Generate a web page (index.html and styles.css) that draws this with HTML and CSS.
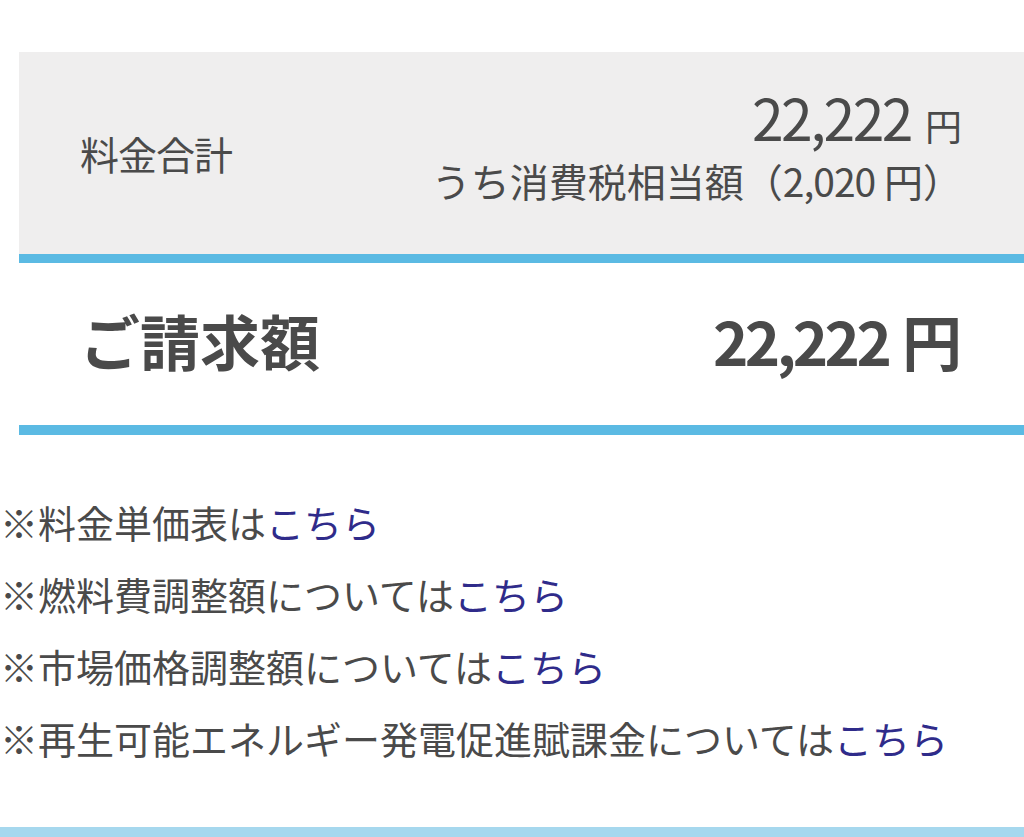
FILE: index.html
```html
<!DOCTYPE html>
<html lang="ja">
<head>
  <meta charset="UTF-8">
  <meta name="viewport" content="width=device-width, initial-scale=1.0">
  <title>ご請求額</title>
  <link rel="stylesheet" href="styles.css">
</head>
<body>
  <div class="page">
    <div class="summary">
      <div class="subtotal">
        <div class="subtotal-label">料金合計</div>
        <div class="subtotal-value">
          <div class="amount"><span class="num">22,222</span><span class="yen">円</span></div>
          <div class="tax">うち消費税相当額（<span class="tax-num">2,020</span> 円）</div>
        </div>
      </div>
      <div class="total">
        <div class="total-label">ご請求額</div>
        <div class="total-value"><span class="num">22,222</span> 円</div>
      </div>
    </div>

    <ul class="notes">
      <li>※料金単価表は<a href="#">こちら</a></li>
      <li>※燃料費調整額については<a href="#">こちら</a></li>
      <li>※市場価格調整額については<a href="#">こちら</a></li>
      <li>※再生可能エネルギー発電促進賦課金については<a href="#">こちら</a></li>
    </ul>

    <div class="footer-bar"></div>
  </div>
</body>
</html>
```

FILE: styles.css
```css
body {
  margin: 0;
  padding: 0;
  background: #fff;
  color: #4a4a4a;
  font-family: "Noto Sans CJK JP", "Noto Sans", sans-serif;
  overflow: hidden;
}
.page {
  padding-top: 52px;
}
.summary {
  margin-left: 19px;
}
.subtotal {
  display: flex;
  align-items: center;
  justify-content: space-between;
  height: 202px;
  padding: 0 62px 0 61px;
  background: #efeeee;
  border-bottom: 9px solid #5bbae3;
}
.subtotal-label {
  font-size: 39px;
  letter-spacing: -1px;
}
.subtotal-value {
  text-align: right;
  padding-bottom: 14px;
}
.amount {
  line-height: 50px;
}
.amount .num {
  font-size: 57px;
  letter-spacing: -2.5px;
}
.amount .yen {
  font-size: 37px;
  margin-left: 14px;
}
.tax {
  font-size: 39px;
  line-height: 42px;
}
.tax-num {
  letter-spacing: -1px;
}
.total {
  display: flex;
  align-items: center;
  justify-content: space-between;
  box-sizing: border-box;
  height: 172px;
  padding: 0 62px 10px 61px;
  border-bottom: 10px solid #5bbae3;
  font-weight: bold;
}
.total-label {
  font-size: 60px;
}
.total-value {
  font-size: 60px;
}
.total-value .num {
  letter-spacing: -3.5px;
}
.notes {
  list-style: none;
  margin: 51px 0 0;
  padding: 0;
  font-size: 38px;
  line-height: 72px;
  white-space: nowrap;
}
.notes a {
  color: #2f2b8a;
  text-decoration: none;
}
.footer-bar {
  margin-top: 53px;
  height: 20px;
  background: #a6d8ee;
}
```
